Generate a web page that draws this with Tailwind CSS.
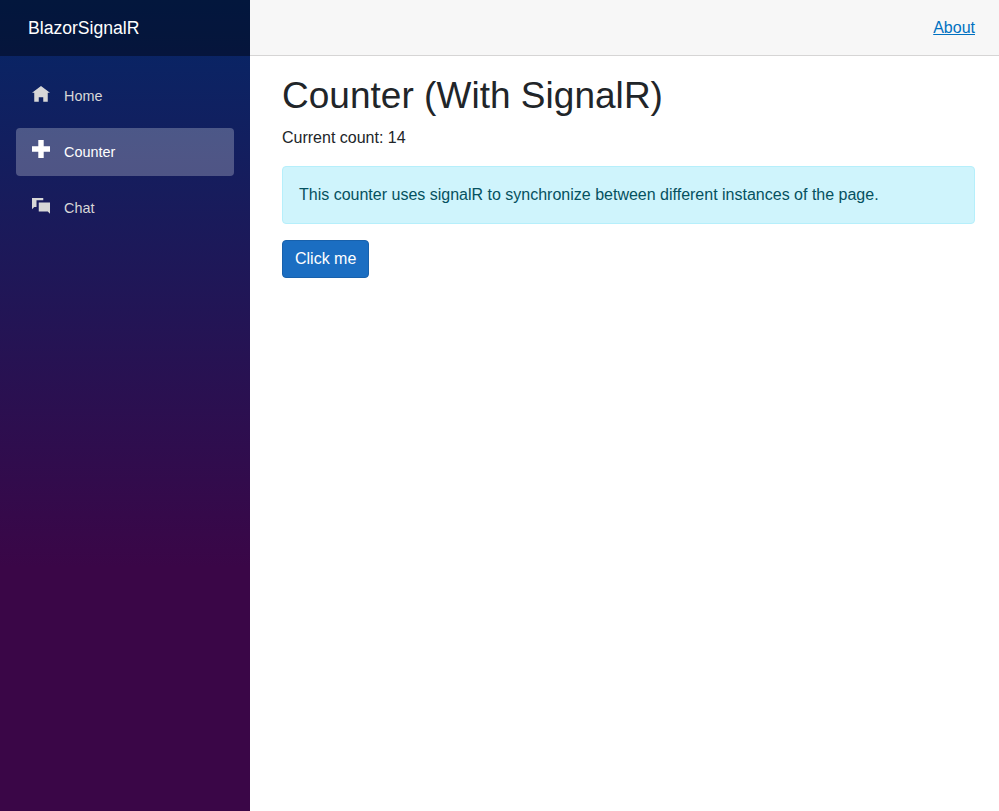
<!DOCTYPE html>
<html lang="en">
<head>
<meta charset="utf-8">
<title>Counter</title>
<script src="https://cdn.jsdelivr.net/npm/@tailwindcss/browser@4"></script>
</head>
<body class="flex h-screen bg-white font-['Liberation_Sans',Arial,sans-serif] text-base leading-6 text-[#212529]">
<aside class="h-full w-[250px] shrink-0 bg-[linear-gradient(180deg,rgb(5,39,103)_0%,#3a0647_70%)]">
  <div class="flex h-14 items-center bg-black/40 pl-7 text-[17.6px] text-white">BlazorSignalR</div>
  <nav class="flex flex-col gap-2 px-4 pt-4 text-[14.4px] text-[#d7d7d7]">
    <a class="flex h-12 items-center rounded px-4">
      <svg class="mr-3.5 -mt-[2px] h-[18px] w-[18px]" viewBox="0 0 8 8" fill="currentColor"><path d="M4 0l-4 3h1v4h2v-2h2v2h2v-4.03l1 .03-4-3z"/></svg>Home</a>
    <a class="flex h-12 items-center rounded bg-white/25 px-4 text-white">
      <svg class="mr-3.5 -mt-[6px] h-[18px] w-[18px]" viewBox="0 0 8 8" fill="currentColor"><path d="M2.8 0v2.8H0v2.4h2.8V8h2.4V5.2H8V2.8H5.2V0z"/></svg>Counter</a>
    <a class="flex h-12 items-center rounded px-4">
      <svg class="mr-3.5 -mt-[2px] h-[18px] w-[18px]" viewBox="0 0 8 8" fill="currentColor"><path d="M0 0v5l1-1h1v-3h3v-1h-5zm3 2v4h4l1 1v-5h-5z"/></svg>Chat</a>
  </nav>
</aside>
<main class="flex-1">
  <header class="flex h-14 items-center justify-end border-b border-[#d6d5d5] bg-[#f7f7f7] pr-6"><a class="text-[#0071c1] underline">About</a></header>
  <article class="pt-[17.6px] pr-6 pl-8">
    <h1 class="mb-2 text-[36.985px] leading-[44.38px] tracking-[0.04px]">Counter (With SignalR)</h1>
    <p class="mb-4">Current count: 14</p>
    <div class="mb-4 rounded border border-[#b6effb] bg-[#cff4fc] p-4 text-[#055160]">This counter uses signalR to synchronize between different instances of the page.</div>
    <button class="h-[38px] rounded border border-[#1861ac] bg-[#1b6ec2] px-3 text-white">Click me</button>
  </article>
</main>
</body>
</html>
